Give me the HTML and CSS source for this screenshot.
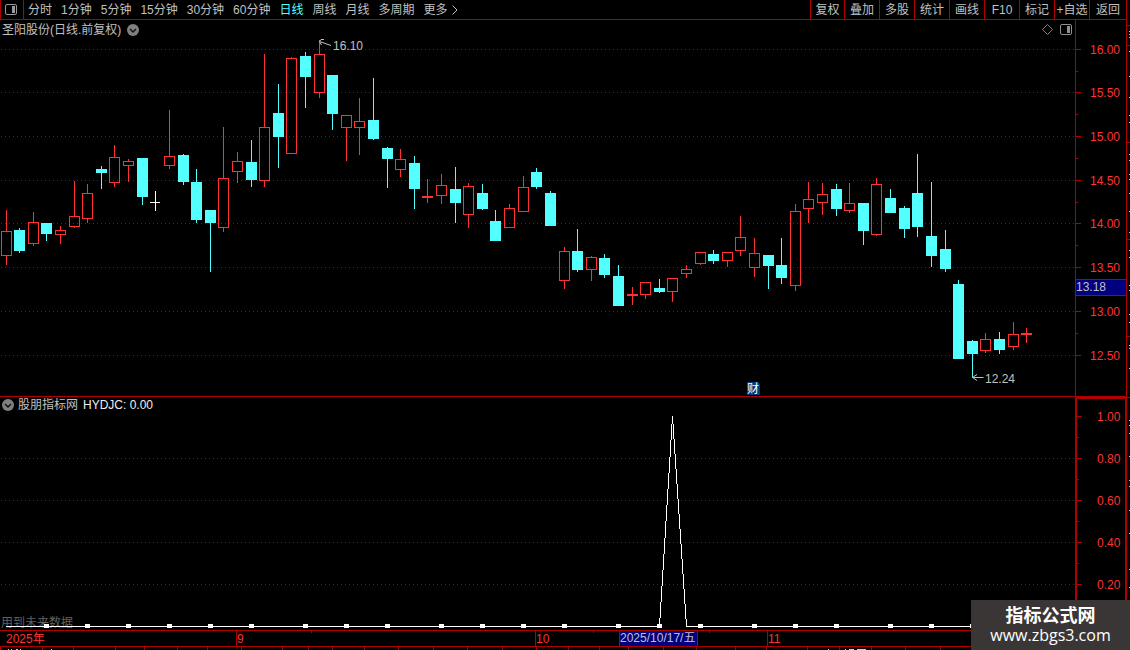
FILE: index.html
```html
<!DOCTYPE html>
<html lang="zh-CN">
<head>
<meta charset="utf-8">
<title>圣阳股份 日线</title>
<link rel="stylesheet" href="styles.css">
</head>
<body>
<header class="toolbar">
  <button class="layout-toggle" aria-label="侧栏">
    <svg width="12" height="11"><rect x="0.5" y="0.5" width="11" height="10" rx="1.5" fill="none" stroke="#9a9a9a"/><rect x="7" y="2" width="3" height="7" fill="#9a9a9a"/></svg>
  </button>
  <nav class="periods">
    <button>分时</button><button>1分钟</button><button>5分钟</button><button>15分钟</button><button>30分钟</button><button>60分钟</button><button class="active">日线</button><button>周线</button><button>月线</button><button>多周期</button><button class="more">更多<svg width="6" height="10"><path d="M0.5 0.5L5 5L0.5 9.5" fill="none" stroke="#c0c0c0"/></svg></button>
  </nav>
  <nav class="tools">
    <button>复权</button><button>叠加</button><button>多股</button><button>统计</button><button>画线</button><button>F10</button><button>标记</button><button>+自选</button><button>返回</button>
  </nav>
</header>

<main class="workspace">
  <div class="row price-row">
    <section class="plot">
      <svg class="canvas" id="price"><g transform="translate(0 -20)">
        <g id="price-grid" class="grid"></g>
        <g id="candles"></g>
        <g class="arrow"><path d="M331 45.500L319.500 41.500M324 39.500H321L319.500 41.500L321.500 45"/><path d="M983.500 377.500H972.500M977 374.500L972.500 377.500L977 380.500"/></g>
        <text class="mark" x="333" y="50">16.10</text>
        <text class="mark" x="985" y="383">12.24</text>
        <path d="M747 382H758L760 384V395H747Z" fill="#003a78"/>
        <text class="event" x="747" y="393">财</text>
      </g></svg>
      <div class="caption">
        <span>圣阳股份(日线.前复权)</span>
        <button aria-label="展开"><svg width="12" height="12"><circle cx="6" cy="6" r="6" fill="#808080"/><path d="M3 5L6 8L9 5" fill="none" stroke="#111" stroke-width="1.500"/></svg></button>
      </div>
      <div class="corner">
        <button aria-label="标记"><svg width="11" height="11"><path d="M5.500 0.500L10.500 5.500L5.500 10.500L0.500 5.500Z" fill="none" stroke="#808080"/></svg></button>
        <button aria-label="面板"><svg width="12" height="11"><rect x="0.500" y="0.500" width="11" height="10" rx="1.500" fill="none" stroke="#909090"/><rect x="7" y="2" width="3" height="7" fill="#909090"/></svg></button>
      </div>
    </section>
    <svg class="axis" id="price-axis"><g transform="translate(0 -20)"></g></svg>
    <svg class="edge" data-top="20"></svg>
  </div>
  <div class="row indicator-row">
    <section class="plot">
      <svg class="canvas" id="indicator"><g transform="translate(0 -397)">
        <g id="indicator-grid" class="grid"></g>
        <text class="notice" x="1" y="627">用到未来数据</text>
        <polyline class="signal" points="6,626.5 659.5,626.5 672.5,416.5 686.5,626.5 972,626.5"/>
        <g id="dots"></g>
      </g></svg>
      <div class="caption sub">
        <button aria-label="展开"><svg width="12" height="12"><circle cx="6" cy="6" r="6" fill="#808080"/><path d="M3 5L6 8L9 5" fill="none" stroke="#111" stroke-width="1.500"/></svg></button>
        <span>股朋指标网</span><span class="value">HYDJC: 0.00</span>
      </div>
    </section>
    <svg class="axis thick" id="indicator-axis"><g transform="translate(0 -399)"></g></svg>
    <svg class="edge" data-top="397"></svg>
  </div>
</main>

<footer class="bottom">
  <svg class="timeline"><g transform="translate(0 -631)">
    <path class="rule" d="M236.500 631V646M535.500 631V646M767.500 631V646M311.500 631V633M593.500 631V633M709.500 631V633"/>
    <rect x="619.500" y="630.500" width="78" height="16" class="cursor-box"/>
    <text class="tick-label" x="6" y="643">2025年</text>
    <text class="tick-label" x="237" y="643">9</text>
    <text class="tick-label" x="536" y="643">10</text>
    <text class="tick-label" x="768" y="643">11</text>
    <text class="cursor-label" x="620" y="642">2025/10/17/五</text>
  </g></svg>
  <svg class="ruler" id="ruler"></svg>
  <div class="watermark"><strong>指标公式网</strong><a href="#">www.zbgs3.com</a></div>
</footer>
<script src="chart.js"></script>
</body>
</html>
```
FILE: styles.css
```css
* { box-sizing: border-box; }
body {
  margin: 0;
  min-height: 100vh;
  display: flex;
  flex-direction: column;
  overflow: hidden;
  background: #000;
  color: #c0c0c0;
  font: 12px/16px "Liberation Sans", "Noto Sans CJK SC", sans-serif;
}
button {
  margin: 0;
  padding: 0;
  border: 0;
  background: none;
  color: inherit;
  font: inherit;
  white-space: nowrap;
}
svg { display: block; }
text { font: 12px "Liberation Sans", "Noto Sans CJK SC", sans-serif; }

.toolbar {
  display: flex;
  height: 20px;
  margin-right: 3px;
  border: solid #b00000;
  border-width: 0 1px 1px;
}
.layout-toggle {
  width: 23px;
  padding-left: 4px;
  border-right: 1px solid #b00000;
}
.periods {
  display: flex;
  gap: 9px;
  margin-left: 4px;
}
.periods .active { color: #54ffff; }
.more { display: flex; align-items: center; gap: 4px; }
.tools { display: flex; margin-left: auto; }
.tools button { width: 35px; border-left: 1px solid #b00000; }
.tools button:first-child { width: 34px; }
.tools button:last-child { width: 37px; }

.row { display: flex; }
.price-row { height: 377px; }
.indicator-row { height: 233px; }
.plot {
  position: relative;
  flex: 1;
  min-width: 0;
}
.price-row .plot, .price-row .axis { border-bottom: 1px solid #b00000; }
.canvas { width: 100%; height: 100%; }
.axis {
  width: 52px;
  border: solid #b00000;
  border-width: 0 1px;
}
.axis.thick { border-width: 2px 2px 0; }
.edge { width: 3px; height: 100%; }

.caption {
  position: absolute;
  top: 2px;
  left: 2px;
  display: flex;
  align-items: center;
  gap: 6px;
}
.caption.sub { top: 0; gap: 4px; }
.caption .value { margin-left: 1px; color: #f0f0f0; }
.corner {
  position: absolute;
  top: 4px;
  right: 3px;
  display: flex;
  gap: 7px;
}

.grid line, .rule { stroke: #b00000; fill: none; }
.grid line { stroke-dasharray: 1 3; }
.up { stroke: #ff3232; fill: none; }
.down { stroke: #54ffff; fill: #54ffff; }
.flat { stroke: #fff; fill: none; }
.arrow { stroke: #c0c0c0; fill: none; }
.mark, .cursor-label { fill: #c0c0c0; }
.event { fill: #fff; }
.tick-label { fill: #ff3232; }
.notice { fill: #606060; }
.signal { stroke: #fff; fill: none; shape-rendering: crispEdges; }
.dot { fill: #fff; }
.cursor-box { fill: #000080; stroke: #b00000; }
.speck { fill: #c0c0c0; }
.speck.cyan { fill: #54ffff; }

.bottom {
  position: relative;
  border-top: 1px solid #b00000;
}
.timeline {
  width: 100%;
  height: 16px;
  border-bottom: 1px solid #b00000;
}
.ruler { width: 100%; height: 3px; }
.watermark {
  position: absolute;
  right: 0;
  bottom: 0;
  width: 159px;
  height: 50px;
  padding-top: 3px;
  display: flex;
  flex-direction: column;
  align-items: center;
  background: #3a3636;
  color: #fff;
}
.watermark strong { font: bold 18px/22px "Noto Sans CJK SC", sans-serif; }
.watermark a {
  color: #fff;
  text-decoration: none;
  font: 16px/20px "Open Sans", "Noto Sans", sans-serif;
}
```
FILE: chart.js
```js
const NS = 'http://www.w3.org/2000/svg';
function add(parent, tag, attrs, text) {
  const el = document.createElementNS(NS, tag);
  for (const k in attrs) el.setAttribute(k, attrs[k]);
  if (text) el.textContent = text;
  parent.appendChild(el);
}
const $ = s => document.querySelector(s);

// centre, high, body top, body bottom, low, kind (u = up, d = down, f = flat)
const candles = `6 210 231 256 265 u
19 228 230 251 253 d
33 212 222 244 246 u
46 223 223 234 241 d
60 226 230 235 244 u
74 181 216 227 228 u
87 184 193 219 223 u
101 166 169 173 189 d
114 145 157 183 187 u
128 159 161 166 182 u
142 158 158 197 205 d
155 191 202 203 211 f
169 110 156 166 169 u
183 154 155 182 185 d
196 169 182 220 223 d
210 210 210 223 272 d
223 127 178 228 232 u
237 152 161 172 183 u
251 140 162 180 187 d
264 54 127 181 187 u
278 84 113 137 168 d
291 57 58 154 154 u
305 52 56 77 108 d
319 40 54 93 98 u
332 75 75 114 130 d
346 115 115 128 161 u
359 98 121 128 155 u
373 78 120 139 140 d
387 147 148 159 188 d
400 149 159 170 177 u
414 156 163 189 209 d
427 179 196 198 203 u
441 174 185 196 204 u
455 167 189 203 223 d
468 183 186 215 228 u
482 184 193 209 210 d
495 210 221 241 241 d
509 204 208 228 228 u
523 176 187 212 212 u
536 168 172 187 189 d
550 191 193 226 226 d
564 247 251 281 289 u
577 229 251 270 272 d
591 256 257 270 281 u
604 254 258 275 278 d
618 265 276 306 306 d
632 287 294 296 305 u
645 282 282 295 299 u
659 279 288 292 293 d
672 278 278 292 302 u
686 265 269 274 278 u
700 252 252 264 265 u
713 250 254 261 264 d
727 252 252 261 267 u
740 216 237 251 256 u
754 238 253 268 277 u
768 255 255 266 289 d
781 238 265 278 284 d
795 204 211 286 291 u
808 182 199 209 223 u
822 183 194 203 215 u
836 184 189 209 216 d
849 183 203 211 213 u
863 203 203 231 245 d
876 178 184 235 236 u
890 189 198 213 213 d
904 206 208 229 238 d
917 154 193 227 237 d
931 182 236 256 267 d
945 230 249 269 272 d
958 280 284 359 359 d
972 340 341 354 377 d
985 333 339 351 353 u
999 332 339 350 354 d
1013 322 334 347 350 u
1026 328 333 335 343 u`;

for (const row of candles.split('\n')) {
  const p = row.split(' ');
  const [x, high, top, bottom, low] = p.map(Number);
  const cls = { u: 'up', d: 'down', f: 'flat' }[p[5]];
  const c = x + 0.5;
  add($('#candles'), 'path', { class: cls, d: `M${c} ${high}V${top}M${c} ${bottom}V${low}` });
  if (cls === 'flat') {
    add($('#candles'), 'path', { class: cls, d: `M${x - 5} ${top + 0.5}H${x + 5}M${c} ${top}V${bottom}` });
  } else {
    add($('#candles'), 'rect', { class: cls, x: x - 4.5, y: top + 0.5, width: 10, height: bottom - top - 1 });
  }
}

function scale(grid, axis, levels, labels, minors) {
  levels.forEach((y, i) => {
    if (labels[i] !== '1.00') add($(grid), 'line', { x1: 1, x2: '100%', y1: y + 0.5, y2: y + 0.5 });
    add($(axis + ' g'), 'path', { class: 'rule', d: `M0 ${y + 0.5}H5` });
    add($(axis + ' g'), 'text', { class: 'tick-label', x: axis === '#price-axis' ? 14 : 20, y: y + 5 }, labels[i]);
  });
  for (const y of minors) add($(axis + ' g'), 'path', { class: 'rule', d: `M0 ${y + 0.5}H2` });
}
scale('#price-grid', '#price-axis', [49, 92, 136, 180, 223, 267, 311, 355],
  ['16.00', '15.50', '15.00', '14.50', '14.00', '13.50', '13.00', '12.50'],
  [71, 114, 158, 202, 245, 333]);
scale('#indicator-grid', '#indicator-axis', [416, 458, 500, 542, 584],
  ['1.00', '0.80', '0.60', '0.40', '0.20'], [437, 479, 521, 563]);
add($('#price-axis g'), 'rect', { class: 'cursor-box', x: -0.5, y: 279.5, width: 52, height: 16 });
add($('#price-axis g'), 'text', { class: 'cursor-label', x: 0, y: 291 }, '13.18');

for (const x of [46, 87, 128, 169, 210, 251, 305, 346, 387, 441, 482, 523, 564, 618, 659, 700, 754, 795, 836, 890, 931, 972]) {
  add($('#dots'), 'rect', { class: 'dot', x: x - 2, y: 624, width: 5, height: 4 });
}

for (const x of [0, 42, 73, 115, 144, 177, 207, 241, 282, 308, 332, 364, 398, 433, 467, 502, 536, 568, 599, 628, 663, 696, 735, 766, 807, 839, 871, 905, 940]) {
  add($('#ruler'), 'path', { class: 'rule', d: `M${x + 0.5} 0V3` });
}
for (const [x, w] of [[8, 1], [11, 1], [16, 2], [20, 1], [51, 1], [828, 1]]) {
  add($('#ruler'), 'rect', { class: 'speck', x, y: 2, width: w, height: 1 });
}
for (const [x, w] of [[845, 1], [849, 5], [857, 9]]) {
  add($('#ruler'), 'rect', { class: 'speck cyan', x, y: 2, width: w, height: 1 });
}

// neighbouring quote panel: separators and the first pixels of its rows
for (const el of document.querySelectorAll('.edge')) {
  const top = Number(el.dataset.top);
  for (const y of [25, 45, 142, 239, 336, 397]) add(el, 'path', { class: 'rule', d: `M0 ${y - top + 0.5}H3` });
  for (const y of [31, 34, 37, 51, 76, 97, 115, 122, 154, 160, 174, 179, 193, 211, 232, 250, 257, 285, 290, 314, 322, 345, 348, 368, 420, 425, 433, 456, 480, 486, 510, 533, 569, 587]) {
    add(el, 'rect', { class: 'speck', x: 2, y: y - top, width: 1, height: 1 });
  }
}
```
